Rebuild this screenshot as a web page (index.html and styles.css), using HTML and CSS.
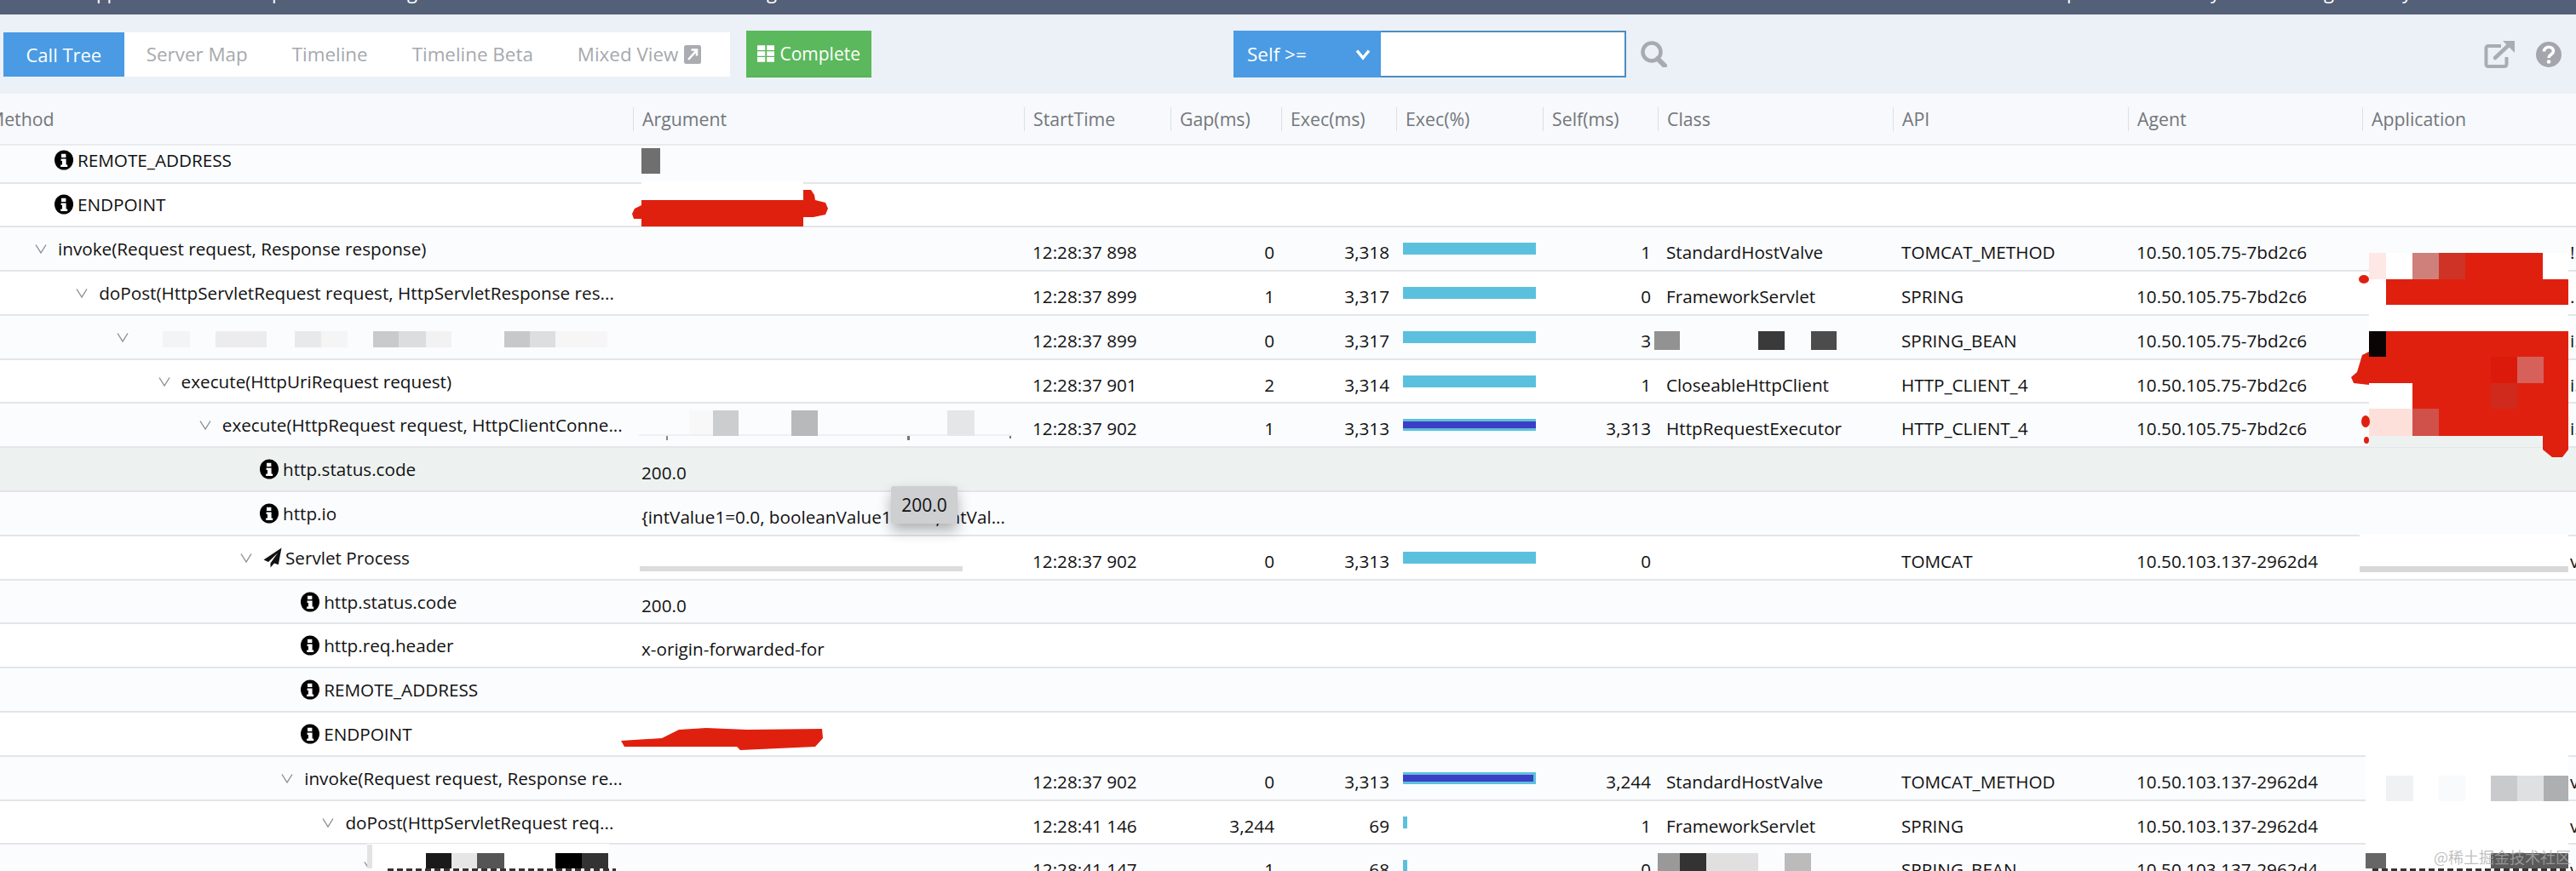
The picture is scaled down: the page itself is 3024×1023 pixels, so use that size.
FILE: index.html
```html
<!DOCTYPE html>
<html lang="en">
<head>
<meta charset="utf-8">
<title>Call Tree</title>
<link rel="stylesheet" href="styles.css">
</head>
<body>
<svg class="defs" width="0" height="0" aria-hidden="true">
  <symbol id="info" viewBox="0 0 22 24"><ellipse cx="11" cy="12" rx="11" ry="11.6" fill="#000"/><path d="M8 4.8h5.4v4.2H8zM7.6 10.4h6v7h1.6v2.6H7.2v-2.6h1.8v-4.4H7.6z" fill="#fff"/></symbol>
  <symbol id="caret" viewBox="0 0 14 14"><path d="M1 2.5 7 12 13 2.5" fill="none" stroke="#8b8e92" stroke-width="1.4"/></symbol>
  <symbol id="plane" viewBox="0 0 22 24"><path d="M21.5.5 .5 14.500l5.500 2.400L17 6.500 8.500 18.500v5l4.500-5 4.800 1.700z" fill="#111"/></symbol>
</svg>

<div class="topbar">
  <span class="crumb c1">pp</span><span class="crumb c2">p</span><span class="crumb c3">g</span><span class="crumb c4">g</span><span class="crumb c5">p</span><span class="crumb c6">y</span><span class="crumb c7">g</span><span class="crumb c8">y</span>
</div>

<div class="toolbar">
  <nav class="tabs">
    <a class="tab active">Call Tree</a>
    <a class="tab">Server Map</a>
    <a class="tab">Timeline</a>
    <a class="tab">Timeline Beta</a>
    <a class="tab">Mixed View
      <svg class="tab-icon" viewBox="0 0 20 22"><rect width="20" height="22" rx="2.5" fill="#a9acb0"/><path d="M5 17 14 7M8.5 5.5H15v7" fill="none" stroke="#fff" stroke-width="2.6"/></svg>
    </a>
  </nav>
  <button class="complete">
    <svg class="complete-icon" viewBox="0 0 21 20"><path d="M0 0h9.500v5.800H0zM11.500 0H21v5.800h-9.500zM0 7.100h9.500v5.800H0zM11.500 7.100H21v5.800h-9.500zM0 14.200h9.500V20H0zM11.500 14.200H21V20h-9.500z" fill="#fff"/></svg>
    Complete
  </button>
  <div class="filter">
    <div class="filter-select">
      <span>Self &gt;=</span>
      <svg class="filter-caret" viewBox="0 0 18 14"><path d="M2 2.500 9 11l7-8.500" fill="none" stroke="#fff" stroke-width="3.400"/></svg>
    </div>
    <input class="filter-input" type="text">
  </div>
  <svg class="search" viewBox="0 0 32 31"><circle cx="13" cy="13" r="10.500" fill="none" stroke="#a7abb1" stroke-width="4.500"/><path d="M20 21l8 8" stroke="#a7abb1" stroke-width="6" stroke-linecap="round"/></svg>
  <svg class="external" viewBox="0 0 36 32"><path d="M20 6H5a2.500 2.500 0 0 0-2.500 2.500v19A2.500 2.500 0 0 0 5 30h19a2.500 2.500 0 0 0 2.500-2.500V19" fill="none" stroke="#a9adb3" stroke-width="4"/><path d="M13 20 29 5" stroke="#a9adb3" stroke-width="4.500" stroke-linecap="round"/><path d="M22 0h14v14z" fill="#a9adb3"/></svg>
  <svg class="help" viewBox="0 0 30 30"><circle cx="15" cy="15" r="15" fill="#a3a7ad"/><path d="M9.500 11.500c0-7 11-7 11 -.5 0 4-5.500 4-5.500 8" fill="none" stroke="#fff" stroke-width="3.600"/><circle cx="15" cy="23.500" r="2.300" fill="#fff"/></svg>
</div>

<main class="tree">
  <div class="row head">
    <div class="th first">Method</div><div class="th">Argument</div><div class="th">StartTime</div><div class="th">Gap(ms)</div><div class="th">Exec(ms)</div><div class="th">Exec(%)</div><div class="th">Self(ms)</div><div class="th">Class</div><div class="th">API</div><div class="th">Agent</div><div class="th">Application</div>
  </div>

  <div class="row short">
    <div class="method d0"><svg class="info"><use href="#info"/></svg>REMOTE_ADDRESS</div><div class="cell"></div><div class="cell"></div><div class="cell"></div><div class="cell"></div><div class="cell"></div><div class="cell"></div><div class="cell"></div><div class="cell"></div><div class="cell"></div><div class="cell"></div>
  </div>
  <div class="row">
    <div class="method d0"><svg class="info"><use href="#info"/></svg>ENDPOINT</div><div class="cell"></div><div class="cell"></div><div class="cell"></div><div class="cell"></div><div class="cell"></div><div class="cell"></div><div class="cell"></div><div class="cell"></div><div class="cell"></div><div class="cell"></div>
  </div>
  <div class="row">
    <div class="method d0"><svg class="caret"><use href="#caret"/></svg>invoke(Request request, Response response)</div><div class="cell"></div><div class="cell">12:28:37 898</div><div class="cell num">0</div><div class="cell num">3,318</div><div class="cell bar-cell"><div class="bar" style="width:100%"></div></div><div class="cell num">1</div><div class="cell">StandardHostValve</div><div class="cell">TOMCAT_METHOD</div><div class="cell">10.50.105.75-7bd2c6</div><div class="cell app">!.</div>
  </div>
  <div class="row">
    <div class="method d1"><svg class="caret"><use href="#caret"/></svg>doPost(HttpServletRequest request, HttpServletResponse res...</div><div class="cell"></div><div class="cell">12:28:37 899</div><div class="cell num">1</div><div class="cell num">3,317</div><div class="cell bar-cell"><div class="bar" style="width:100%"></div></div><div class="cell num">0</div><div class="cell">FrameworkServlet</div><div class="cell">SPRING</div><div class="cell">10.50.105.75-7bd2c6</div><div class="cell app">.</div>
  </div>
  <div class="row">
    <div class="method d2"><svg class="caret"><use href="#caret"/></svg></div><div class="cell"></div><div class="cell">12:28:37 899</div><div class="cell num">0</div><div class="cell num">3,317</div><div class="cell bar-cell"><div class="bar" style="width:100%"></div></div><div class="cell num">3</div><div class="cell"></div><div class="cell">SPRING_BEAN</div><div class="cell">10.50.105.75-7bd2c6</div><div class="cell app">i.</div>
  </div>
  <div class="row">
    <div class="method d3"><svg class="caret"><use href="#caret"/></svg>execute(HttpUriRequest request)</div><div class="cell"></div><div class="cell">12:28:37 901</div><div class="cell num">2</div><div class="cell num">3,314</div><div class="cell bar-cell"><div class="bar" style="width:100%"></div></div><div class="cell num">1</div><div class="cell">CloseableHttpClient</div><div class="cell">HTTP_CLIENT_4</div><div class="cell">10.50.105.75-7bd2c6</div><div class="cell app">i.</div>
  </div>
  <div class="row">
    <div class="method d4"><svg class="caret"><use href="#caret"/></svg>execute(HttpRequest request, HttpClientConne...</div><div class="cell"></div><div class="cell">12:28:37 902</div><div class="cell num">1</div><div class="cell num">3,313</div><div class="cell bar-cell"><div class="bar" style="width:100%"><div class="bar-self" style="width:100%"></div></div></div><div class="cell num">3,313</div><div class="cell">HttpRequestExecutor</div><div class="cell">HTTP_CLIENT_4</div><div class="cell">10.50.105.75-7bd2c6</div><div class="cell app">i.</div>
  </div>
  <div class="row selected">
    <div class="method d5"><svg class="info"><use href="#info"/></svg>http.status.code</div><div class="cell">200.0</div><div class="cell"></div><div class="cell"></div><div class="cell"></div><div class="cell"></div><div class="cell"></div><div class="cell"></div><div class="cell"></div><div class="cell"></div><div class="cell"></div>
  </div>
  <div class="row">
    <div class="method d5"><svg class="info"><use href="#info"/></svg>http.io</div><div class="cell">{intValue1=0.0, booleanValue1=true, intVal...</div><div class="cell"></div><div class="cell"></div><div class="cell"></div><div class="cell"></div><div class="cell"></div><div class="cell"></div><div class="cell"></div><div class="cell"></div><div class="cell"></div>
  </div>
  <div class="row">
    <div class="method d5"><svg class="caret"><use href="#caret"/></svg><svg class="plane"><use href="#plane"/></svg>Servlet Process</div><div class="cell"></div><div class="cell">12:28:37 902</div><div class="cell num">0</div><div class="cell num">3,313</div><div class="cell bar-cell"><div class="bar" style="width:100%"></div></div><div class="cell num">0</div><div class="cell"></div><div class="cell">TOMCAT</div><div class="cell">10.50.103.137-2962d4</div><div class="cell app">v</div>
  </div>
  <div class="row">
    <div class="method d6"><svg class="info"><use href="#info"/></svg>http.status.code</div><div class="cell">200.0</div><div class="cell"></div><div class="cell"></div><div class="cell"></div><div class="cell"></div><div class="cell"></div><div class="cell"></div><div class="cell"></div><div class="cell"></div><div class="cell"></div>
  </div>
  <div class="row">
    <div class="method d6"><svg class="info"><use href="#info"/></svg>http.req.header</div><div class="cell">x-origin-forwarded-for</div><div class="cell"></div><div class="cell"></div><div class="cell"></div><div class="cell"></div><div class="cell"></div><div class="cell"></div><div class="cell"></div><div class="cell"></div><div class="cell"></div>
  </div>
  <div class="row">
    <div class="method d6"><svg class="info"><use href="#info"/></svg>REMOTE_ADDRESS</div><div class="cell"></div><div class="cell"></div><div class="cell"></div><div class="cell"></div><div class="cell"></div><div class="cell"></div><div class="cell"></div><div class="cell"></div><div class="cell"></div><div class="cell"></div>
  </div>
  <div class="row">
    <div class="method d6"><svg class="info"><use href="#info"/></svg>ENDPOINT</div><div class="cell"></div><div class="cell"></div><div class="cell"></div><div class="cell"></div><div class="cell"></div><div class="cell"></div><div class="cell"></div><div class="cell"></div><div class="cell"></div><div class="cell"></div>
  </div>
  <div class="row">
    <div class="method d6"><svg class="caret"><use href="#caret"/></svg>invoke(Request request, Response re...</div><div class="cell"></div><div class="cell">12:28:37 902</div><div class="cell num">0</div><div class="cell num">3,313</div><div class="cell bar-cell"><div class="bar" style="width:100%"><div class="bar-self" style="width:98%"></div></div></div><div class="cell num">3,244</div><div class="cell">StandardHostValve</div><div class="cell">TOMCAT_METHOD</div><div class="cell">10.50.103.137-2962d4</div><div class="cell app">v</div>
  </div>
  <div class="row">
    <div class="method d7"><svg class="caret"><use href="#caret"/></svg>doPost(HttpServletRequest req...</div><div class="cell"></div><div class="cell">12:28:41 146</div><div class="cell num">3,244</div><div class="cell num">69</div><div class="cell bar-cell"><div class="bar" style="width:3%"></div></div><div class="cell num">1</div><div class="cell">FrameworkServlet</div><div class="cell">SPRING</div><div class="cell">10.50.103.137-2962d4</div><div class="cell app">v</div>
  </div>
  <div class="row">
    <div class="method d8"><svg class="caret"><use href="#caret"/></svg></div><div class="cell"></div><div class="cell">12:28:41 147</div><div class="cell num">1</div><div class="cell num">68</div><div class="cell bar-cell"><div class="bar" style="width:3%"></div></div><div class="cell num">0</div><div class="cell"></div><div class="cell">SPRING_BEAN</div><div class="cell">10.50.103.137-2962d4</div><div class="cell app">v</div>
  </div>
</main>

<svg class="redactions" viewBox="0 0 3024 1023" width="3024" height="1023" aria-hidden="true">
  <!-- row 1 argument -->
  <rect x="753" y="174" width="22" height="30" fill="#6f6f70"/>
  <rect x="753" y="213" width="190" height="22" fill="#fff"/>
  <path d="M753 235H943V223h9l4 6 1 6 12 3 3 7-3 7-14 3H943v11H753v-9h-9l-2-6 3-6 8-4z" fill="#e0200f"/>
  <!-- method mosaic -->
  <rect x="165" y="389" width="550" height="19" fill="#fbfcfe"/>
  <rect x="191" y="389" width="32" height="19" fill="#f3f4f5"/>
  <rect x="253" y="389" width="60" height="19" fill="#ececee"/>
  <rect x="346" y="389" width="31" height="19" fill="#e8e9ea"/>
  <rect x="377" y="389" width="31" height="19" fill="#f5f5f6"/>
  <rect x="438" y="389" width="30" height="19" fill="#c9cacc"/>
  <rect x="468" y="389" width="32" height="19" fill="#dcdddf"/>
  <rect x="500" y="389" width="30" height="19" fill="#f2f2f3"/>
  <rect x="592" y="389" width="30" height="19" fill="#c7c8ca"/>
  <rect x="622" y="389" width="30" height="19" fill="#dddee0"/>
  <rect x="652" y="389" width="61" height="19" fill="#f6f6f7"/>
  <!-- class mosaic row 4 -->
  <rect x="1942" y="389" width="30" height="22" fill="#929292"/>
  <rect x="2064" y="389" width="31" height="22" fill="#3a3a3a"/>
  <rect x="2126" y="389" width="30" height="22" fill="#4c4c4c"/>
  <!-- execute argument mosaic -->
  <rect x="750" y="510" width="438" height="2" fill="#eef0f2"/>
  <rect x="782" y="512" width="2" height="5" fill="#888"/>
  <rect x="1065" y="512" width="3" height="5" fill="#777"/>
  <rect x="1185" y="512" width="2" height="3" fill="#777"/>
  <rect x="809" y="482" width="28" height="28" fill="#f8f8f9"/>
  <rect x="837" y="482" width="30" height="30" fill="#cccdcf"/>
  <rect x="929" y="482" width="31" height="30" fill="#b8b9bb"/>
  <rect x="1112" y="482" width="32" height="30" fill="#e5e6e7"/>
  <!-- servlet argument -->
  <rect x="751" y="665" width="379" height="6" fill="#dcdcdc"/>
  <!-- application block, upper -->
  <rect x="2781" y="297" width="234" height="228" fill="#fff"/>
  <rect x="2781" y="297" width="20" height="31" fill="#fde8e6"/>
  <rect x="2832" y="297" width="31" height="31" fill="#d0807a"/>
  <rect x="2863" y="297" width="31" height="31" fill="#cf3325"/>
  <rect x="2894" y="297" width="91" height="31" fill="#e0200f"/>
  <rect x="2801" y="328" width="214" height="30" fill="#e0200f"/>
  <rect x="2781" y="389" width="20" height="30" fill="#0a0405"/>
  <rect x="2801" y="389" width="214" height="30" fill="#e0200f"/>
  <path d="M2781 419h234v31h-234zM2832 450h183v30h-183zM2863 480h152v32h-152zM2985 512h30v16l-7 9h-12l-11-9z" fill="#e0200f"/>
  <path d="M2781 413l-8 4-6 20-7 6 3 7 18 2z" fill="#e0200f"/>
  <rect x="2924" y="419" width="31" height="31" fill="#dc1a0c"/>
  <rect x="2955" y="419" width="31" height="31" fill="#d6605a"/>
  <rect x="2924" y="450" width="31" height="30" fill="#cf2a1c"/>
  <rect x="2781" y="480" width="51" height="32" fill="#fee0da"/>
  <rect x="2832" y="480" width="31" height="32" fill="#d0504a"/>
  <rect x="2781" y="512" width="204" height="13" fill="#edf2f1"/>
  <ellipse cx="2775" cy="328" rx="6" ry="5" fill="#e0200f"/>
  <ellipse cx="2777" cy="495" rx="5" ry="7" fill="#e0200f"/>
  <ellipse cx="2778" cy="517" rx="3" ry="4" fill="#e0200f"/>
  <!-- application, servlet -->
  <rect x="2770" y="627" width="245" height="38" fill="#fff"/>
  <rect x="2770" y="665" width="245" height="7" fill="#d8d8d8"/>
  <!-- second endpoint -->
  <path d="M729 870l48-3 20-10 32-2 48 2 88-1 1 11-9 10-44 2-44 2-4-4H733z" fill="#e0200f"/>
  <!-- application, lower -->
  <rect x="2777" y="887" width="238" height="136" fill="#fff"/>
  <rect x="2801" y="911" width="32" height="30" fill="#f0f1f2"/>
  <rect x="2863" y="911" width="31" height="30" fill="#f9fafb"/>
  <rect x="2924" y="911" width="31" height="30" fill="#c9cacc"/>
  <rect x="2955" y="911" width="31" height="30" fill="#dfe0e1"/>
  <rect x="2986" y="911" width="29" height="30" fill="#aeafb1"/>
  <rect x="2777" y="1002" width="24" height="18" fill="#666"/>
  <rect x="2924" y="1002" width="91" height="18" fill="#5a5a5a"/>
  <path d="M2785 1021.500H3015" stroke="#333" stroke-width="3" stroke-dasharray="7 4"/>
  <!-- last row mosaics -->
  <rect x="431" y="991" width="284" height="32" fill="#fff"/>
  <rect x="431" y="992" width="6" height="28" fill="#e2e3e5"/>
  <rect x="500" y="1002" width="30" height="18" fill="#1a1a1a"/>
  <rect x="530" y="1002" width="30" height="18" fill="#e6e6e6"/>
  <rect x="560" y="1002" width="32" height="18" fill="#555"/>
  <rect x="652" y="1002" width="31" height="18" fill="#000"/>
  <rect x="683" y="1002" width="31" height="18" fill="#333"/>
  <path d="M455 1021.500H723" stroke="#333" stroke-width="3" stroke-dasharray="7 4"/>
  <rect x="1946" y="1002" width="26" height="21" fill="#999"/>
  <rect x="1972" y="1002" width="31" height="21" fill="#333"/>
  <rect x="2003" y="1002" width="61" height="21" fill="#e0e0e0"/>
  <rect x="2095" y="1002" width="31" height="21" fill="#bbb"/>
</svg>

<div class="tooltip">200.0</div>
<div class="watermark">@稀土掘金技术社区</div>
</body>
</html>
```

FILE: styles.css
```css
* { box-sizing: border-box; }
html, body { margin: 0; height: 1023px; overflow: hidden; }
body {
  position: relative;
  font-family: "Open Sans", "Noto Sans", sans-serif;
  font-size: 20.7px;
  color: #111;
  background: #fff;
}
.defs { position: absolute; }

.topbar {
  position: relative;
  height: 17px;
  background: #546078;
  overflow: hidden;
}
.crumb {
  position: absolute;
  top: -23px;
  font-size: 22px;
  line-height: 26px;
  color: #fff;
}
.c1 { left: 113px; letter-spacing: -1px; }
.c2 { left: 319px; }
.c3 { left: 478px; }
.c4 { left: 900px; }
.c5 { left: 2426px; }
.c6 { left: 2595px; }
.c7 { left: 2728px; }
.c8 { left: 2820px; }

.toolbar {
  display: flex;
  align-items: center;
  height: 93px;
  padding: 0 17px 0 4px;
  background: #ecf0f7;
}
.tabs {
  display: flex;
  flex: none;
  width: 853px;
  height: 52px;
  background: #fff;
}
.tab {
  display: flex;
  align-items: center;
  gap: 7px;
  padding: 0 26px;
  font-size: 22.4px;
  color: #a6a9ae;
}
.tab.active {
  padding: 0 26.5px;
  font-size: 22px;
  background: #4a9be3;
  color: #fff;
  font-weight: 500;
}
.tab-icon { width: 20px; height: 22px; }
.complete {
  display: flex;
  align-items: center;
  gap: 6px;
  height: 55px;
  width: 147px;
  margin-left: 19px;
  padding: 0 13px;
  border: 0;
  border-bottom: 1px solid #4cae4c;
  background: #5cb85c;
  color: #fff;
  font: inherit;
  font-size: 21px;
}
.complete-icon { width: 21px; height: 20px; }
.filter {
  display: flex;
  height: 55px;
  margin-left: 425px;
}
.filter-select {
  display: flex;
  align-items: center;
  justify-content: space-between;
  width: 173px;
  padding: 0 12px 0 16px;
  background: #4a9be3;
  color: #fff;
  font-size: 22.5px;
  font-weight: 500;
}
.filter-caret { width: 18px; height: 14px; }
.filter-input {
  width: 288px;
  border: 2px solid #4d8dc0;
  border-left: 0;
  background: #fff;
  outline: 0;
}
.search { width: 32px; height: 31px; margin-left: 17px; }
.external { width: 36px; height: 32px; margin-left: auto; }
.help { width: 30px; height: 30px; margin-left: 25px; }

.tree { margin-left: -24px; }
.row {
  display: grid;
  grid-template-columns: 767px 459px 172px 130px 135px 172px 135px 276px 276px 275px 251px;
  height: 51.8px;
  border-bottom: 2px solid #e3e5e8;
  background: #fff;
}
.row:nth-child(even) { background: #fbfcfe; }
.row.short { height: 44.5px; }
.row.short .method { padding-bottom: 8px; }
.row.selected { background: #edf2f1; }
.row.head {
  height: 61px;
  align-items: center;
  border-bottom-color: #e9ebee;
  background: #f7f9fc;
  color: #73767b;
  font-size: 21.3px;
}
.th {
  height: 28px;
  padding-left: 10px;
  border-left: 1px solid #dcdfe3;
  line-height: 28px;
}
.th.first { padding-left: 10px; border-left: 0; }

.method {
  display: flex;
  align-items: center;
  white-space: nowrap;
  overflow: hidden;
  padding-left: calc(65px + var(--d) * 48.2px);
}
.d0 { --d: 0; }
.d1 { --d: 1; }
.d2 { --d: 2; }
.d3 { --d: 3; }
.d4 { --d: 4; }
.d5 { --d: 5; }
.d6 { --d: 6; }
.d7 { --d: 7; }
.d8 { --d: 8; }
.caret { flex: none; width: 14px; height: 14px; margin-right: 13px; }
.info { flex: none; width: 22px; height: 24px; margin: 0 5px 0 23px; }
.plane { flex: none; width: 22px; height: 24px; margin: 0 4px 0 0; }

.cell {
  display: flex;
  align-items: center;
  padding: 8px 8px 0 10px;
  white-space: nowrap;
  overflow: hidden;
}
.num { justify-content: flex-end; }
.app { padding-left: 244px; }
.bar-cell { padding: 0 8px; }
.bar {
  display: flex;
  flex: none;
  align-items: center;
  height: 14px;
  background: #5bc0de;
}
.bar-self { height: 8px; background: #3c3fc4; }

.redactions {
  position: absolute;
  left: 0;
  top: 0;
}
.tooltip {
  position: absolute;
  left: 1046px;
  top: 571px;
  width: 78px;
  height: 44px;
  background: #cdcfd1;
  border-radius: 3px;
  box-shadow: 0 8px 16px rgba(0, 0, 0, .3);
  font-size: 21px;
  line-height: 44px;
  text-align: center;
}
.watermark {
  position: absolute;
  left: 2857px;
  top: 994px;
  font-family: "Noto Sans CJK SC", sans-serif;
  font-size: 18px;
  line-height: 24px;
  color: rgba(170, 170, 170, .75);
}
```
